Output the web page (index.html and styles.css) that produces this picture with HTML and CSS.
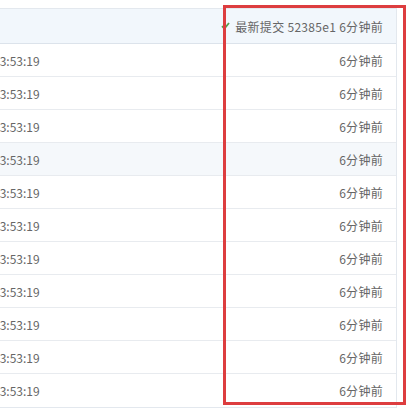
FILE: index.html
```html
<!DOCTYPE html>
<html lang="zh">
<head>
<meta charset="utf-8">
<link rel="stylesheet" href="styles.css">
</head>
<body>
<div class="page">
  <div class="table">
    <div class="row head">
      <div class="cell time"></div>
      <div class="cell ago">
        <svg class="check" width="9" height="8" viewBox="0 0 9 8"><path d="M1 4.2 L3.4 6.6 L8 1" fill="none" stroke="#55a04e" stroke-width="1.8"/></svg>
        <span>最新提交 52385e1 6分钟前</span>
      </div>
    </div>
    <div class="row"><div class="cell time"><span>13:53:19</span></div><div class="cell ago">6分钟前</div></div>
    <div class="row"><div class="cell time"><span>13:53:19</span></div><div class="cell ago">6分钟前</div></div>
    <div class="row"><div class="cell time"><span>13:53:19</span></div><div class="cell ago">6分钟前</div></div>
    <div class="row hover"><div class="cell time"><span>13:53:19</span></div><div class="cell ago">6分钟前</div></div>
    <div class="row"><div class="cell time"><span>13:53:19</span></div><div class="cell ago">6分钟前</div></div>
    <div class="row"><div class="cell time"><span>13:53:19</span></div><div class="cell ago">6分钟前</div></div>
    <div class="row"><div class="cell time"><span>13:53:19</span></div><div class="cell ago">6分钟前</div></div>
    <div class="row"><div class="cell time"><span>13:53:19</span></div><div class="cell ago">6分钟前</div></div>
    <div class="row"><div class="cell time"><span>13:53:19</span></div><div class="cell ago">6分钟前</div></div>
    <div class="row"><div class="cell time"><span>13:53:19</span></div><div class="cell ago">6分钟前</div></div>
    <div class="row"><div class="cell time"><span>13:53:19</span></div><div class="cell ago">6分钟前</div></div>
  </div>
  <div class="highlight"></div>
</div>
</body>
</html>
```
FILE: styles.css
```css
html, body {
  margin: 0;
  padding: 0;
  background: #ffffff;
  overflow: hidden;
}
.page {
  position: relative;
  width: 413px;
  height: 413px;
  padding-top: 8px;
  box-sizing: border-box;
  font-family: "Noto Sans CJK SC", "Microsoft YaHei", sans-serif;
  font-size: 12px;
  color: #666666;
}
.table {
  width: 397px;
  border-top: 1px solid #e3e8ee;
  border-right: 1px solid #e3e8ee;
  border-bottom: 1px solid #e3e8ee;
  box-sizing: border-box;
}
.row {
  display: flex;
  height: 33px;
  border-bottom: 1px solid #e8ebef;
  box-sizing: border-box;
}
.row:last-child {
  border-bottom: none;
}
.row.head {
  height: 35px;
  background: #f2f7fc;
  border-bottom: 1px solid #dce3eb;
}
.row.hover {
  background: #f5f8fb;
}
.cell {
  display: flex;
  align-items: center;
  box-sizing: border-box;
}
.time {
  width: 224px;
  overflow: hidden;
}
.time span {
  margin-left: -7px;
  white-space: nowrap;
}
.ago {
  flex: 1;
  justify-content: flex-end;
  padding-right: 13px;
  white-space: nowrap;
  letter-spacing: 0.3px;
}
.check {
  margin-right: 5px;
}
.highlight {
  position: absolute;
  left: 223px;
  top: 5px;
  width: 183px;
  height: 400px;
  border: 3px solid #dd3d3f;
  box-sizing: border-box;
  pointer-events: none;
}
```
